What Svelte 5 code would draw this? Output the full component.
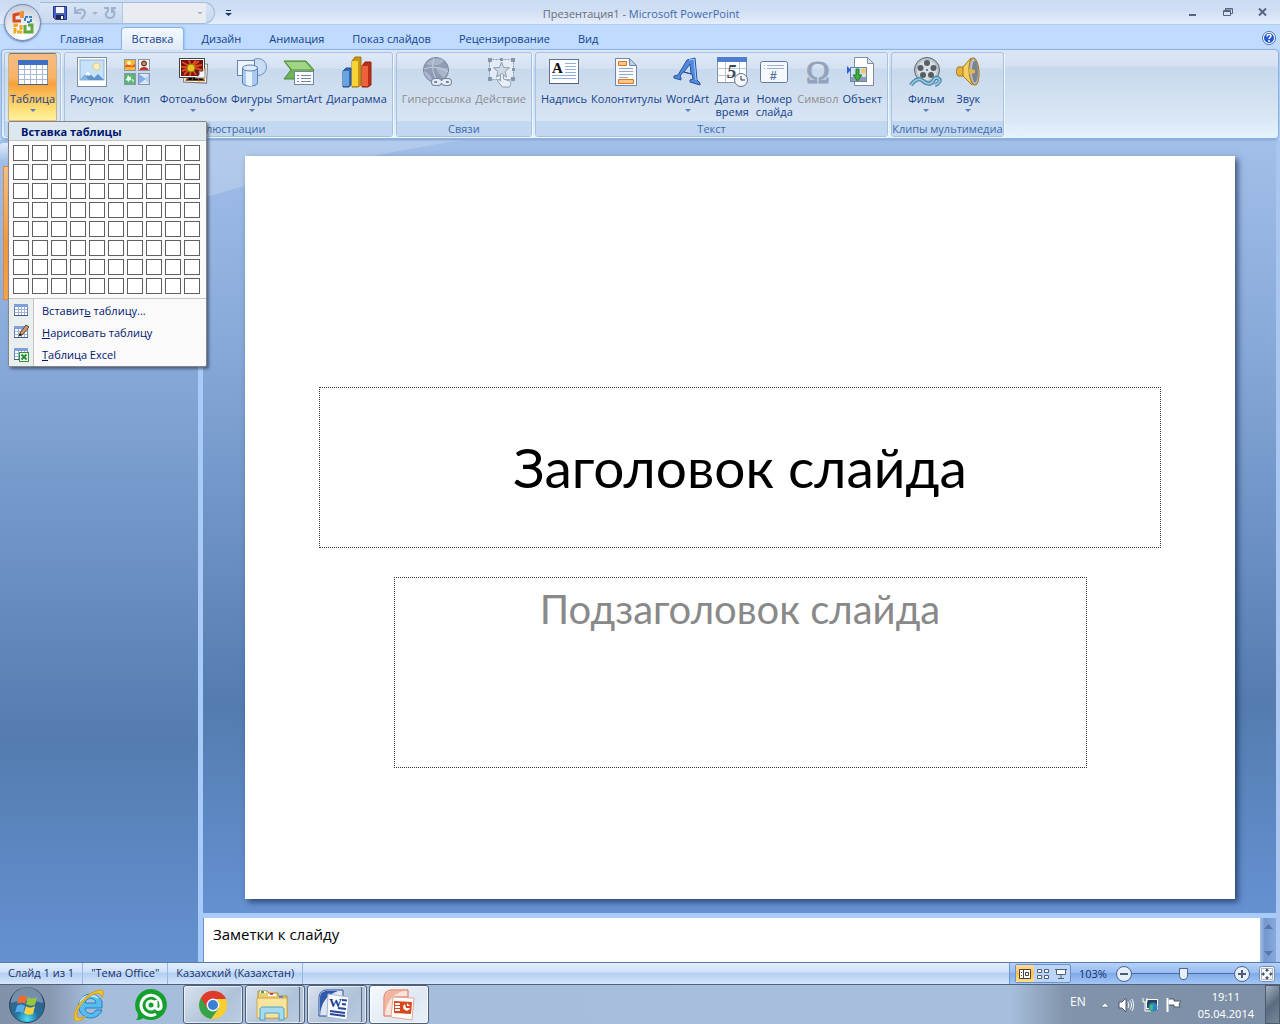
<svelte:options runes={true} />

<script lang="ts">
	type Tool = { icon: string; label: string; arrow?: boolean; disabled?: boolean };
	type Group = { title: string; tools: Tool[] };

	const tabs = ['Главная', 'Вставка', 'Дизайн', 'Анимация', 'Показ слайдов', 'Рецензирование', 'Вид'];

	const groups: Group[] = [
		{
			title: 'Иллюстрации',
			tools: [
				{ icon: 'picture', label: 'Рисунок' },
				{ icon: 'clip', label: 'Клип' },
				{ icon: 'album', label: 'Фотоальбом', arrow: true },
				{ icon: 'shapes', label: 'Фигуры', arrow: true },
				{ icon: 'smartart', label: 'SmartArt' },
				{ icon: 'chart', label: 'Диаграмма' }
			]
		},
		{
			title: 'Связи',
			tools: [
				{ icon: 'link', label: 'Гиперссылка', disabled: true },
				{ icon: 'action', label: 'Действие', disabled: true }
			]
		},
		{
			title: 'Текст',
			tools: [
				{ icon: 'textbox', label: 'Надпись' },
				{ icon: 'header', label: 'Колонтитулы' },
				{ icon: 'wordart', label: 'WordArt', arrow: true },
				{ icon: 'date', label: 'Дата и\nвремя' },
				{ icon: 'number', label: 'Номер\nслайда' },
				{ icon: 'symbol', label: 'Символ', disabled: true },
				{ icon: 'object', label: 'Объект' }
			]
		},
		{
			title: 'Клипы мультимедиа',
			tools: [
				{ icon: 'film', label: 'Фильм', arrow: true },
				{ icon: 'sound', label: 'Звук', arrow: true }
			]
		}
	];

	const menuItems = [
		{ icon: 'insert', before: 'Вставит', key: 'ь', after: ' таблицу...' },
		{ icon: 'draw', before: '', key: 'Н', after: 'арисовать таблицу' },
		{ icon: 'excel', before: '', key: 'Т', after: 'аблица Excel' }
	];

	const rows = [1, 2, 3, 4, 5, 6, 7, 8];
	const cols = [1, 2, 3, 4, 5, 6, 7, 8, 9, 10];

	let activeTab = $state('Вставка');
	let zoom = $state(103);
	let notes = $state('Заметки к слайду');
</script>

{#snippet toolIcon(name: string)}
	<svg class="icon" viewBox="0 0 32 32" aria-hidden="true">
		{#if name === 'table'}
			<rect x="1.500" y="4.500" width="29" height="24" fill="#fff" stroke="#7f93b5" />
			<rect x="1" y="4" width="30" height="5" fill="#3f6fc4" />
			<path d="M2 13.500h28M2 18.500h28M2 23.500h28M7.500 9v19M13.500 9v19M19.500 9v19M25.500 9v19" stroke="#a9bad6" fill="none" />
			<path d="M1 28.500h30" stroke="#4a5f86" />
		{:else if name === 'picture'}
			<rect x="1.500" y="1.500" width="29" height="29" fill="#fff" stroke="#7d90a8" />
			<rect x="4" y="4" width="24" height="20" fill="#c4e2fa" stroke="#8fb3d6" />
			<circle cx="20.500" cy="10.500" r="3.500" fill="#fdf1c0" stroke="#e8c77c" />
			<path d="M4 24l8-9 6 7 4-4 6 6z" fill="#5f93c9" />
			<path d="M9 18l3-3 3 3.500-2 1.500-1-1-2 1z" fill="#f4faff" />
			<path d="M4 24l5-5 4 5z" fill="#87b3df" />
		{:else if name === 'clip'}
			<rect x="3.500" y="3.500" width="11" height="11" fill="#f7b733" stroke="#8b97a8" />
			<path d="M4 10l3-2 4 2 3-2v3H4z" fill="#e6552a" />
			<circle cx="8" cy="7" r="2" fill="#fff1a8" />
			<rect x="17.500" y="3.500" width="11" height="11" fill="#eef2f7" stroke="#8b97a8" />
			<circle cx="23" cy="7.500" r="2.500" fill="#c98555" stroke="#402a20" />
			<path d="M18.500 14c0-4 9-4 9 0z" fill="#c83728" />
			<rect x="3.500" y="17.500" width="11" height="11" fill="#56b573" stroke="#8b97a8" />
			<path d="M7 19l1.500 2 2-.5-1 2 1.500 1.500-2.500.5-1 2-1-2-2-.5 1.500-2zM11 23l2 1-1 3z" fill="#eafbe9" />
			<rect x="17.500" y="17.500" width="11" height="11" fill="#dbe8fb" stroke="#8b97a8" />
			<path d="M18 18l7 5-7 5z" fill="#86aeea" />
			<path d="M28 18v10l-4-5z" fill="#b6cdf2" />
		{:else if name === 'album'}
			<g transform="rotate(3 18 18)">
				<rect x="7" y="7.500" width="23" height="19" fill="#fff" stroke="#777" />
				<rect x="9" y="9" width="19" height="16" fill="#e9a021" />
				<path d="M9 25l9-9 10 8M18 16l10-3M18 17l-3 8M18 17l5 8M18 16l10 2" stroke="#b8480e" />
			</g>
			<rect x="2.500" y="2.500" width="25" height="19" fill="#fff" stroke="#444" />
			<rect x="4" y="4" width="22" height="16" fill="#6c150d" />
			<path d="M14 11L5 6M14 11l-2-7M14 11l5-7M14 11l8-6M14 11l11-2M14 11l11 3M14 11l5 8M14 11l-1 9M14 11l-7 8M14 11l-9 4M14 11H4" stroke="#e4471d" stroke-width="2" />
			<circle cx="14" cy="12" r="4" fill="#e9c31d" stroke="#8d7a10" />
			<path d="M28 12v10h-10c4-1 5-4 4-7 3 1 5 0 6-3z" fill="#f4f4f4" stroke="#888" />
		{:else if name === 'shapes'}
			<circle cx="22" cy="11" r="8.500" fill="#c8dcf5" stroke="#6f94c4" />
			<rect x="1.500" y="4.500" width="17" height="15" fill="#eef5fd" stroke="#6585b3" />
			<path d="M6.500 12v15c0 4 15 4 15 0V12z" fill="#a9c9ee" stroke="#5c81b6" />
			<path d="M10 14v15c3 1 5 1 6 1V14z" fill="#e7f2fe" />
			<ellipse cx="14" cy="12" rx="7.500" ry="3" fill="#ddebfa" stroke="#5c81b6" />
		{:else if name === 'smartart'}
			<path d="M1 5h22l8 9-7 9H1l7-9z" fill="#6fb554" stroke="#47883a" />
			<path d="M3 6h19l6 7H9z" fill="#a2d487" />
			<rect x="11.500" y="15.500" width="19" height="13" fill="#f8fafc" stroke="#78889c" />
			<path d="M14 19.500h2M14 22.500h2M14 25.500h2M18 19.500h10M18 22.500h10M18 25.500h10" stroke="#75869f" />
		{:else if name === 'chart'}
			<path d="M2 15l3-3h5v17l-2 2H2z" fill="#2f6cb5" stroke="#244f87" />
			<path d="M2 15h6v15H2z" fill="#69a4e0" />
			<path d="M11 5l3-4h6v28l-3 2h-6z" fill="#c99510" stroke="#a2760e" />
			<path d="M11 5h6v25h-6z" fill="#f6d339" />
			<path d="M21 10l3-4h6v23l-3 2h-6z" fill="#b82e16" stroke="#962410" />
			<path d="M21 10h6v20h-6z" fill="#f0623b" />
		{:else if name === 'link'}
			<circle cx="15" cy="14" r="12.500" fill="#8e9db5" stroke="#76869f" />
			<path d="M5 8c4-6 14-7 18-3-2 3-9 6-18 3zM3 15c5 2 8 5 8 10-5-2-8-6-8-10zM16 11c5 0 8 2 11 1 0 6-3 9-5 10-2-4-8-6-6-11z" fill="#a9b6ca" />
			<path d="M3 13c8-3 16-2 24 3M13 2c-3 8-1 17 4 24" stroke="#c3cedd" fill="none" />
			<g fill="none" stroke="#75859e" stroke-width="4">
				<rect x="12" y="24" width="7" height="4" rx="2" />
				<rect x="22" y="24" width="7" height="4" rx="2" />
			</g>
			<g fill="none" stroke="#e4ebf4" stroke-width="2">
				<rect x="12" y="24" width="7" height="4" rx="2" />
				<rect x="22" y="24" width="7" height="4" rx="2" />
				<path d="M16 26h9" />
			</g>
		{:else if name === 'action'}
			<rect x="4.500" y="3.500" width="24" height="20" fill="#e3ebf5" stroke="#8e9cb0" stroke-dasharray="2 1" />
			<path d="M3 2h4v4H3zM15 2h3v3h-3zM26 2h4v4h-4zM3 12h3v3H3zM27 12h3v3h-3zM3 21h4v4H3zM26 21h4v4h-4z" fill="#8595ae" />
			<path d="M16.500 6l2 5.500 6 .3-4.500 3.700 1.500 5.500-5-3-5 3 1.500-5.500-4.500-3.700 6-.3z" fill="#d0dae7" stroke="#8e9cb0" />
			<path d="M15.500 19c0-2 3-2 3 0v4l6 2c2 1 1 4 0 6h-7l-5-6c0-2 2-1 3 0z" fill="#e9eff6" stroke="#8e9cb0" />
		{:else if name === 'textbox'}
			<rect x="1.500" y="3.500" width="29" height="24" fill="#fff" stroke="#60738f" />
			<path d="M1 28h30v-1H1z" fill="#4f617d" />
			<text x="4" y="17" font-size="15" font-family="Liberation Serif, serif" font-weight="700" fill="#111">A</text>
			<path d="M17 7.500h11M17 10.500h11M17 13.500h11M17 16.500h11M4 19.500h24M4 22.500h24" stroke="#8fb0dd" />
		{:else if name === 'header'}
			<path d="M5.500 2.500h14l7 7v20h-21z" fill="#f7fafe" stroke="#7186a5" />
			<path d="M19.500 2.500v7h7z" fill="#bcd1ec" stroke="#7186a5" />
			<path d="M8.500 5.500h8v4h-8zM8.500 23.500h15v4h-15z" fill="#f9c78c" stroke="#df7a1c" />
			<path d="M9 12.500h14M9 15.500h14M9 18.500h14M9 21.500h9" stroke="#94a9c7" />
		{:else if name === 'wordart'}
			<path d="M15 4l8-2 2 22 3 3v2l-10-3v-2l3-1-1-5-9-2-3 4 1 2v2L2 22v-2l4-1zM18 8l-6 8 7 2z" fill="#4f8ae0" stroke="#2a519c" fill-rule="evenodd" />
			<path d="M17 4l5-1 2 21" stroke="#a6cbfa" fill="none" />
		{:else if name === 'date'}
			<rect x="1.500" y="1.500" width="29" height="25" fill="#fff" stroke="#8294b0" />
			<rect x="1" y="1" width="30" height="5" fill="#4f7ed0" />
			<path d="M2 12.500h28M2 19.500h28M9.500 6v20M23.500 6v20" stroke="#b8c4d8" />
			<text x="11" y="22" font-size="19" font-family="Liberation Serif, serif" font-weight="700" font-style="italic" fill="#3d4550">5</text>
			<circle cx="25" cy="24" r="6.500" fill="#f3f6fa" stroke="#66758c" />
			<path d="M25 20v4h4" stroke="#333" fill="none" />
		{:else if name === 'number'}
			<rect x="2.500" y="5.500" width="27" height="21" rx="2" fill="#f5f9fe" stroke="#63789a" />
			<path d="M6 9.500h1M9 9.500h17M6 12.500h1M9 12.500h17" stroke="#9fb1ca" />
			<text x="12" y="24" font-size="12" font-family="Liberation Sans, sans-serif" font-weight="700" fill="#55709c">#</text>
		{:else if name === 'symbol'}
			<text x="16" y="27" text-anchor="middle" font-size="32" font-family="Liberation Serif, serif" fill="#94a3bb" stroke="#94a3bb">Ω</text>
		{:else if name === 'object'}
			<path d="M8.500 1.500h13l6 6v22h-19z" fill="#fff" stroke="#7f8ea3" />
			<path d="M21.500 1.500v6h6z" fill="#dfe6ef" stroke="#7f8ea3" />
			<rect x="4.500" y="11.500" width="16" height="14" fill="#cfe3f7" stroke="#6d83a4" />
			<path d="M5 21h15v4H5z" fill="#8c9db5" />
			<circle cx="17.500" cy="15" r="2.500" fill="#f5c661" />
			<path d="M10 13h3v6h3l-4.500 6L7 19h3z" fill="#3eae43" stroke="#25762a" />
			<path d="M1 10l4 4-4 4z" fill="#2f62cf" />
		{:else if name === 'film'}
			<circle cx="17" cy="14" r="12.500" fill="#b9c0c6" stroke="#5d666e" />
			<circle cx="17" cy="14" r="10" fill="#d9dee2" />
			<g fill="#555f68">
				<circle cx="17" cy="7" r="3" /><circle cx="23.500" cy="12" r="3" /><circle cx="21" cy="19" r="3" />
				<circle cx="13" cy="19" r="3" /><circle cx="10.500" cy="12" r="3" /><circle cx="17" cy="14" r="1" />
			</g>
			<path d="M1 29c4-6 9-7 12-4s8 4 10 0 4-4 6-2-1 5-4 6" fill="none" stroke="#3e7a9b" stroke-width="4" />
			<path d="M1 29c4-6 9-7 12-4s8 4 10 0 4-4 6-2-1 5-4 6" fill="none" stroke="#8ec8e3" stroke-width="2" />
		{:else if name === 'sound'}
			<path d="M6 11h6v9H6c-2-2-2-7 0-9z" fill="#e7b23c" stroke="#a67617" />
			<path d="M11 11L19 2l4 14-3 13-9-9z" fill="#f3cf64" stroke="#a67617" />
			<ellipse cx="22" cy="15.500" rx="5" ry="13.500" fill="#b4bac0" stroke="#a67617" transform="rotate(-4 22 15)" />
			<ellipse cx="23" cy="15.500" rx="3" ry="11" fill="#7b848d" />
			<path d="M17 13l6 1v3l-6 1z" fill="#e5b748" />
		{/if}
	</svg>
{/snippet}

{#snippet menuIcon(name: string)}
	<svg class="menu-icon" viewBox="0 0 16 16" aria-hidden="true">
		<rect x="1.500" y="2.500" width="13" height="11" fill="#fff" stroke="#6c83b5" />
		<path d="M1 2h14v3H1z" fill="#7f9fdc" />
		<path d="M2 7.500h12M2 10.500h12M5.500 5v8M8.500 5v8M11.500 5v8" stroke="#9db2d8" fill="none" />
		<path d="M1 13.500h14" stroke="#44598a" />
		{#if name === 'draw'}
			<path d="M6 12l1-3 6-8 3 2-7 8z" fill="#d69a62" stroke="#5d4632" />
			<path d="M6 12l1-3 2 2z" fill="#222" />
		{:else if name === 'excel'}
			<rect x="6.500" y="6.500" width="9" height="9" fill="#e6f5e3" stroke="#3a8d3f" />
			<path d="M8.500 8.500l5 5M13.500 8.500l-5 5" stroke="#2f8a36" stroke-width="2" />
		{/if}
	</svg>
{/snippet}

<div class="window">
	<header class="chrome">
		<div class="titlebar">
			<div class="quick">
				<button class="plain" aria-label="Сохранить">
					<svg viewBox="0 0 16 16" width="16" height="16">
						<path d="M1.500 1.500h13v13h-11l-2-2z" fill="#4a5fc4" stroke="#28357f" />
						<path d="M4 2h8v6H4z" fill="#f4f6fc" />
						<path d="M4 10h8v4H4z" fill="#20284e" /><path d="M9 11h2v3H9z" fill="#fff" />
					</svg>
				</button>
				<button class="plain" aria-label="Отменить" disabled>
					<svg viewBox="0 0 16 16" width="16" height="16">
						<path d="M3 2v6h6M4 7c3-4 9-3 9 1 0 3-2 4-4 6" fill="none" stroke="#9fb1cf" stroke-width="2" />
					</svg>
				</button>
				<span class="arrow pale"></span>
				<button class="plain" aria-label="Повторить" disabled>
					<svg viewBox="0 0 16 16" width="16" height="16">
						<path d="M2 3h4v3C2 9 4 13 8 13c5 0 6-6 2-9M10 8V3h4" fill="none" stroke="#9fb1cf" stroke-width="2" />
					</svg>
				</button>
				<select aria-label="Стиль" disabled></select>
			</div>
			<button class="plain customize" aria-label="Настройка панели">
				<svg viewBox="0 0 7 8" width="7" height="8"><path d="M1 1h5v1H1zM0 4h7L3.500 7z" fill="#1d3468" /></svg>
			</button>
			<h1><span>Презентация1 -</span> Microsoft PowerPoint</h1>
			<div class="controls">
				<button class="plain" aria-label="Свернуть"><svg viewBox="0 0 10 10" width="10" height="10"><path d="M1 6h7v2H1z" fill="#56657d" /></svg></button>
				<button class="plain" aria-label="Восстановить">
					<svg viewBox="0 0 10 10" width="10" height="10"><path d="M2.500 2V.5h7v5H8M.5 2.500h7v5h-7zM0 3.500h8M2 1h7" fill="none" stroke="#56657d" /></svg>
				</button>
				<button class="plain" aria-label="Закрыть"><svg viewBox="0 0 10 10" width="10" height="10"><path d="M1 .5l7 7M8 .5l-7 7" stroke="#56657d" stroke-width="2" /></svg></button>
			</div>
		</div>

		<button class="office" aria-label="Кнопка Office">
			<svg viewBox="0 0 24 24" width="24" height="24" fill="none">
				<path d="M10 10H3V4l8-2v5" stroke="#d9481c" stroke-width="3" />
				<path d="M8 3l3-1v5" stroke="#f2902a" stroke-width="3" />
				<path d="M14 10V6h6v5h-4" stroke="#3a80c9" stroke-width="2" stroke-dasharray="3 1" />
				<path d="M10 14v7H4v-7h4" stroke="#f2a71f" stroke-width="3" stroke-dasharray="5 1" />
				<path d="M14 14v7h7v-7h-4" stroke="#63a83c" stroke-width="3" />
			</svg>
		</button>

		<nav class="tabs">
			{#each tabs as tab}
				<button class="tab" class:active={tab === activeTab} onclick={() => (activeTab = tab)}>{tab}</button>
			{/each}
			<button class="plain help" aria-label="Справка">
				<svg viewBox="0 0 14 14" width="14" height="14">
					<circle cx="7" cy="7" r="6.500" fill="#fff" stroke="#4a6fb5" />
					<circle cx="7" cy="7" r="5" fill="#2458cc" />
					<path d="M5 5.500c0-3 4-2.500 4-.5 0 1.500-2 1.500-2 3M7 9v2" stroke="#fff" fill="none" stroke-width="1.500" />
				</svg>
			</button>
		</nav>

		<div class="ribbon">
			<section class="group front">
				<div class="tools">
					<button class="tool pressed" aria-haspopup="menu" aria-expanded="true">
						{@render toolIcon('table')}
						<span class="caption">Таблица</span>
						<span class="arrow"></span>
					</button>
				</div>
				<div class="strip"></div>

				<div class="menu" role="menu">
					<h3>Вставка таблицы</h3>
					<div class="picker">
						{#each rows as row}
							{#each cols as col}
								<button aria-label={`${col} x ${row}`}></button>
							{/each}
						{/each}
					</div>
					<ul>
						{#each menuItems as item}
							<li>
								<button role="menuitem">
									<span class="gutter">{@render menuIcon(item.icon)}</span>
									<span>{item.before}<u>{item.key}</u>{item.after}</span>
								</button>
							</li>
						{/each}
					</ul>
				</div>
			</section>

			{#each groups as group}
				<section class="group">
					<div class="tools">
						{#each group.tools as tool}
							<button class="tool" disabled={tool.disabled}>
								{@render toolIcon(tool.icon)}
								<span class="caption">{tool.label}</span>
								{#if tool.arrow}<span class="arrow"></span>{/if}
							</button>
						{/each}
					</div>
					<h2 class="strip">{group.title}</h2>
				</section>
			{/each}
		</div>
	</header>

	<main>
		<aside>
			<div class="pane-tab"></div>
			<div class="thumb"></div>
		</aside>
		<div class="editor">
			<div class="stage">
				<svg class="swoosh" viewBox="0 0 1073 773" preserveAspectRatio="none" aria-hidden="true">
					<path d="M0 0H260C170 14 80 34 0 58z" fill="#fff" opacity="0.2" />
				</svg>
				<article class="slide">
					<div class="holder title">Заголовок слайда</div>
					<div class="holder subtitle">Подзаголовок слайда</div>
				</article>
			</div>
			<div class="notes">
				<textarea aria-label="Заметки" bind:value={notes}></textarea>
				<div class="scroll">
					<button class="plain" aria-label="Вверх"><svg viewBox="0 0 9 5" width="9" height="5"><path d="M0 5h9L4.500 0z" fill="#5875a5" /></svg></button>
					<button class="plain" aria-label="Вниз"><svg viewBox="0 0 9 5" width="9" height="5"><path d="M0 0h9L4.500 5z" fill="#5875a5" /></svg></button>
				</div>
			</div>
		</div>
	</main>

	<footer class="status">
		<span class="cell">Слайд 1 из 1</span>
		<span class="cell">"Тема Office"</span>
		<span class="cell">Казахский (Казахстан)</span>
		<div class="view-tools">
			<div class="views">
				<button class="plain on" aria-label="Обычный">
					<svg viewBox="0 0 12 12" width="12" height="12"><path d="M.5 1.500h11v9H.5z" fill="#fff" stroke="#4d4436" /><path d="M4.500 1v10M6.500 4.500h3v3h-3zM2 4.500h1M2 7.500h1" fill="none" stroke="#4d4436" /></svg>
				</button>
				<button class="plain" aria-label="Сортировщик">
					<svg viewBox="0 0 12 12" width="12" height="12"><path d="M.5 1.500h4v3h-4zM7.500 1.500h4v3h-4zM.5 7.500h4v3h-4zM7.500 7.500h4v3h-4z" fill="#fff" stroke="#53607a" /></svg>
				</button>
				<button class="plain" aria-label="Показ слайдов">
					<svg viewBox="0 0 12 12" width="12" height="12"><path d="M1.500 2v4.500h9V2" fill="#fff" stroke="#53607a" /><path d="M0 1.500h12M6 7v3M3 10.500h6" fill="none" stroke="#53607a" /></svg>
				</button>
			</div>
			<output>{zoom}%</output>
			<button class="plain" aria-label="Уменьшить">
				<svg viewBox="0 0 16 16" width="16" height="16"><circle cx="8" cy="8" r="7.500" fill="#e4eefb" stroke="#4d6285" /><path d="M4 7h8v2H4z" fill="#4d5b75" /></svg>
			</button>
			<input type="range" min="10" max="196" aria-label="Масштаб" bind:value={zoom} />
			<button class="plain" aria-label="Увеличить">
				<svg viewBox="0 0 16 16" width="16" height="16"><circle cx="8" cy="8" r="7.500" fill="#e4eefb" stroke="#4d6285" /><path d="M4 7h8v2H4zM7 4h2v8H7z" fill="#4d5b75" /></svg>
			</button>
			<button class="plain fit" aria-label="Вписать в окно">
				<svg viewBox="0 0 16 16" width="16" height="16">
					<rect x=".5" y=".5" width="15" height="15" rx="2" fill="#f5f9ff" stroke="#7c8ca6" />
					<rect x="2.500" y="2.500" width="11" height="11" fill="none" stroke="#6b7687" stroke-dasharray="1 1" />
					<path d="M8 3v3M8 10v3M3 8h3M10 8h3" stroke="#4e596b" />
					<path d="M6 5l2-3 2 3zM6 11l2 3 2-3zM5 6L2 8l3 2zM11 6l3 2-3 2z" fill="#4e596b" />
				</svg>
			</button>
		</div>
	</footer>

	<div class="taskbar">
		<button class="plain start" aria-label="Пуск">
			<svg viewBox="0 0 38 38" width="38" height="38">
				<defs>
					<radialGradient id="orb" cx="50%" cy="90%" r="80%">
						<stop offset="0" stop-color="#4fe0f8" /><stop offset=".4" stop-color="#24719f" /><stop offset="1" stop-color="#3d5c80" />
					</radialGradient>
				</defs>
				<circle cx="19" cy="19" r="17.500" fill="url(#orb)" stroke="#28455f" />
				<path d="M3 17a16 16 0 0 1 32 0c-9-3-23-3-32 0z" fill="#fff" opacity=".3" />
				<path d="M11 11c3-2 5-2 8 0l-2 7c-3-2-5-1-8 0z" fill="#ee6a30" />
				<path d="M20 11c3 2 5 2 9 0l-2 8c-4 1-6 1-9-1z" fill="#96c73c" />
				<path d="M9 20c3-2 5-2 8 0l-2 7c-3-2-6-1-8 0z" fill="#58aee8" />
				<path d="M18 20c3 2 5 2 9 0l-2 8c-4 1-6 1-9-1z" fill="#fbd13f" />
			</svg>
		</button>
		<button class="task" aria-label="Internet Explorer">
			<svg viewBox="0 0 32 32" width="32" height="32">
				<path d="M29 21a12 12 0 1 1 0-8v6H12c0 6 8 8 11 2z" fill="#57bdf0" stroke="#2580bd" />
				<path d="M12 14c1-6 10-6 11 0z" fill="#a9c3df" stroke="#2580bd" />
				<path d="M7 14c2-7 12-10 18-5" fill="none" stroke="#b9e8fc" stroke-width="2" />
				<path d="M2 31C-3 23 13 3 27 1c5 0 3 5 2 8 0-5-4-6-10-3C10 11 2 22 4 28c2 2 5 1 9-1-4 4-9 7-11 4z" fill="#f3c52f" stroke="#d19e1b" />
			</svg>
		</button>
		<button class="task" aria-label="Mail.Ru Агент">
			<svg viewBox="0 0 32 32" width="32" height="32">
				<path d="M16 0a16 15.500 0 1 1-8 29c-2 2-5 2-7 2 2-2 2-4 2-6A16 16 0 0 1 16 0z" fill="#14a02d" />
				<circle cx="16" cy="16" r="4" fill="none" stroke="#fff" stroke-width="3" />
				<path d="M21 11v7c0 4 6 3 5-2a10 10 0 1 0-5 9" fill="none" stroke="#fff" stroke-width="3" />
			</svg>
		</button>
		<button class="task open" aria-label="Google Chrome">
			<svg viewBox="0 0 32 32" width="32" height="32">
				<circle cx="16" cy="16" r="14" fill="#f7cf32" />
				<path d="M16 16L3.900 9A14 14 0 0 0 14 29.900L22 19z" fill="#35a34a" />
				<path d="M3.900 9A14 14 0 0 1 29 10H16l-6 9z" fill="#dd3b2c" />
				<circle cx="16" cy="16" r="6.500" fill="#f4f6f8" /><circle cx="16" cy="16" r="5" fill="#3b7fd4" />
			</svg>
		</button>
		<button class="task open stacked" aria-label="Проводник">
			<svg viewBox="0 0 32 32" width="32" height="32">
				<path d="M2 6V2h9l2 2h9v3h9v22H2z" fill="#e9cd72" stroke="#b59240" />
				<path d="M4 2h6v2H4zM12 5h8v2h-8z" fill="#fff" /><path d="M5 2h3v2H5z" fill="#3aa54e" /><path d="M14 4h3v2h-3z" fill="#d0453a" /><path d="M23 7h4v2h-4z" fill="#3d86d8" />
				<path d="M1 9h30v20H1z" fill="#f8e59b" stroke="#caa850" />
				<path d="M4 31V21c0-2 1-3 3-3h18c2 0 3 1 3 3v10h-5v-7H9v7z" fill="#a5dbf2" stroke="#4e9fc6" />
			</svg>
		</button>
		<button class="task open stacked" aria-label="Microsoft Word">
			<svg viewBox="0 0 32 32" width="32" height="32">
				<path d="M1 27V9c0-5 3-8 8-8h16v7H11v19z" fill="#dfe7f5" stroke="#284c9c" />
				<path d="M2 27C3 14 8 6 20 2H9C5 2 2 4 2 9z" fill="#3059ad" />
				<path d="M10 5l21 3-2 23-20-3z" fill="#f8faff" stroke="#a9b8d4" />
				<text x="11" y="18" font-size="13" font-family="Liberation Serif, serif" font-weight="700" fill="#1e3f8f">W</text>
				<path d="M24 11l5 .5M24 15l4 .5M20 19l8 1M12 22l15 2M12 25l15 2" stroke="#28479a" stroke-width="2" />
			</svg>
		</button>
		<button class="task open current" aria-label="Microsoft PowerPoint">
			<svg viewBox="0 0 32 32" width="32" height="32">
				<path d="M1 27V9c0-5 3-8 8-8h16v7H11v19z" fill="#fbe4db" stroke="#d9694a" />
				<path d="M2 27C3 14 8 6 20 2H9C5 2 2 4 2 9z" fill="#f2b5a0" />
				<path d="M10 8l21 1-2 22-21-3z" fill="#fff" stroke="#e0a896" />
				<path d="M11 12l18 1-1 12-17-1z" fill="#d8481f" />
				<path d="M12 15h5M12 18h5M12 21h5" stroke="#fff" stroke-width="2" />
				<path d="M22 15a3.500 3.500 0 1 0 5 4h-4z" fill="#fff" />
				<path d="M24 14l3 3h-3z" fill="#fff" />
			</svg>
		</button>
		<div class="tray">
			<span class="lang">EN</span>
			<button class="plain" aria-label="Скрытые значки"><svg viewBox="0 0 10 16" width="10" height="16"><path d="M1 10h8L5 6z" fill="#fff" stroke="#4b5869" stroke-width=".5" /></svg></button>
			<button class="plain" aria-label="Громкость">
				<svg viewBox="0 0 16 16" width="16" height="16"><path d="M1 5h3l4-4v14l-4-4H1z" fill="#fff" stroke="#4b5869" /><path d="M10 5c1 2 1 4 0 6M12 3.500c2 3 2 6 0 9M14 2c2 4 2 8 0 12" fill="none" stroke="#fff" /></svg>
			</button>
			<button class="plain" aria-label="Сеть">
				<svg viewBox="0 0 16 16" width="16" height="16"><rect x="4.500" y="2.500" width="11" height="9" fill="#27425e" stroke="#fff" /><path d="M1 1v4h4V1M3 5v9h6" fill="none" stroke="#fff" /><circle cx="11" cy="10" r="4.500" fill="#2785cf" /><path d="M8 9c2-3 4-1 3 1s1 3-1 4c-2-1-3-3-2-5z" fill="#4bc05c" /></svg>
			</button>
			<button class="plain" aria-label="Центр поддержки">
				<svg viewBox="0 0 16 16" width="16" height="16"><path d="M1.500 1v14M2 2h6v2h7l-2 3 1 3H8V8H2z" fill="#fff" stroke="#4b5869" /><path d="M1.500 1v14" stroke="#fff" stroke-width="2" /></svg>
			</button>
			<time>19:11<br />05.04.2014</time>
			<button class="desktop" aria-label="Свернуть все окна"></button>
		</div>
	</div>
</div>

<style>
	:global(body) {
		margin: 0;
		background: #bfdbff;
	}

	.window {
		display: flex;
		flex-direction: column;
		min-height: 100vh;
		font-family: 'Open Sans', 'Noto Sans', sans-serif;
		font-size: 11px;
		line-height: 13px;
		color: #15428b;
	}

	button,
	select,
	textarea {
		font: inherit;
		color: inherit;
	}

	.plain {
		display: flex;
		align-items: center;
		justify-content: center;
		padding: 0;
		border: 0;
		background: none;
	}

	h1,
	h2,
	h3,
	ul {
		margin: 0;
		padding: 0;
		font-size: 11px;
		font-weight: 400;
		list-style: none;
	}

	.chrome {
		position: relative;
		z-index: 2;
	}

	.titlebar {
		display: flex;
		align-items: center;
		height: 25px;
		box-sizing: border-box;
		padding: 2px 12px 0 40px;
		border-bottom: 1px solid #b3cdf0;
		background: linear-gradient(#cbdcf3, #cfdef4 40%, #e4edfb);
	}

	.quick {
		display: flex;
		align-items: center;
		gap: 4px;
		height: 22px;
		box-sizing: border-box;
		padding: 0 8px 0 12px;
		border: 1px solid #a5bddd;
		border-left: 0;
		border-radius: 0 12px 12px 0;
		background: linear-gradient(#d9e5f5, #c7d8ef);
	}

	.quick select {
		appearance: none;
		width: 84px;
		height: 20px;
		border: 0;
		border-left: 1px solid #b5c8e2;
		border-radius: 0;
		opacity: 1;
		background:
			conic-gradient(from -45deg at 50% 100%, #a9b4c4 90deg, transparent 0) 74px 9px / 6px 3px no-repeat,
			#e9ecf1;
		transform: none;
	}

	.customize {
		margin-left: 10px;
	}

	h1 {
		flex: 1;
		padding-right: 138px;
		text-align: center;
		color: #3e6aaa;
	}

	h1 span {
		color: #696d77;
	}

	.controls {
		display: flex;
		gap: 25px;
	}

	.office {
		position: absolute;
		top: 4px;
		left: 4px;
		display: flex;
		align-items: center;
		justify-content: center;
		width: 37px;
		height: 37px;
		padding: 0;
		border: 1px solid #7088ae;
		border-radius: 50%;
		background: radial-gradient(circle at 50% 90%, #fff, #e4e9f1 50%, #b9c4d6);
		box-shadow: 0 1px 2px rgba(50, 70, 110, 0.6);
	}

	.tabs {
		display: flex;
		gap: 6px;
		height: 24px;
		box-sizing: border-box;
		padding: 2px 4px 0 49px;
		background: #bfdbff;
	}

	.tab {
		padding: 0 10px;
		border: 1px solid transparent;
		border-bottom: 0;
		border-radius: 4px 4px 0 0;
		background: none;
	}

	.tab.active {
		position: relative;
		z-index: 1;
		margin-bottom: -1px;
		padding-bottom: 1px;
		border-color: #8db2e3;
		background: linear-gradient(#f4f9ff, #dfe9f6);
		box-shadow: 1px 0 2px rgba(110, 180, 240, 0.6);
	}

	.help {
		margin-left: auto;
	}

	.ribbon {
		display: flex;
		gap: 3px;
		height: 90px;
		box-sizing: border-box;
		margin: 0 1px 1px;
		padding: 2px 2px 1px;
		border: 1px solid #8db2e3;
		border-radius: 4px;
		background: linear-gradient(#dbe6f4, #d5e1f2 18%, #c7d8ed 20%, #d8e6f3 75%, #e3f4ff);
		box-shadow: 0 1px 2px #7b9cc9;
	}

	.group {
		position: relative;
		display: flex;
		flex-direction: column;
		border: 1px solid #a7c1e0;
		border-radius: 3px;
		background: linear-gradient(#dfe9f6, #d5e1f2 18%, #c9d9ed 20%, #dbe8f5);
		box-shadow: 1px 1px 0 #eef6ff;
	}

	.group.front {
		z-index: 1;
	}

	.tools {
		display: flex;
		flex: 1;
		justify-content: center;
		padding: 0 3px;
	}

	.strip {
		height: 15px;
		border-radius: 0 0 2px 2px;
		background: #c2d8f0;
		line-height: 15px;
		color: #3e6aaa;
		text-align: center;
		white-space: nowrap;
	}

	.tool {
		display: flex;
		flex-direction: column;
		align-items: center;
		min-width: 42px;
		padding: 2px 1px 0;
		border: 1px solid transparent;
		background: none;
	}

	.tool:disabled {
		color: #8d8d8d;
	}

	.tool.pressed {
		border-color: #8b7654 #c5b28e transparent;
		border-radius: 3px 3px 0 0;
		background: linear-gradient(#f3bd85, #f8b467 35%, #f8a13d 45%, #fde27a 85%, #fff0a0);
	}

	.icon {
		width: 32px;
		height: 32px;
		overflow: visible;
	}

	.caption {
		margin-top: 4px;
		white-space: pre-line;
	}

	.arrow {
		width: 0;
		margin-top: 4px;
		border: 3px solid transparent;
		border-top-color: #5b7fb5;
		border-bottom: 0;
	}

	.arrow.pale {
		margin-top: 0;
		border-top-color: #a3b4d0;
	}

	.menu {
		position: absolute;
		top: 68px;
		left: 3px;
		width: 197px;
		border: 1px solid #868686;
		border-radius: 2px;
		background: #fafafa;
		box-shadow: 2px 2px 3px rgba(40, 50, 70, 0.6);
		color: #00156e;
	}

	.menu h3 {
		padding: 3px 12px 2px;
		border-bottom: 1px solid #c5c5c5;
		background: #dde7ee;
		font-weight: 700;
	}

	.picker {
		display: grid;
		grid-template-columns: repeat(10, 16px);
		gap: 3px;
		padding: 4px;
		border-bottom: 1px solid #c5c5c5;
	}

	.picker button {
		height: 16px;
		padding: 0;
		border: 1px solid #606060;
		background: #fff;
	}

	.menu ul {
		padding-bottom: 1px;
		background: linear-gradient(90deg, #e9eeee 24px, #c5c5c5 24px, #c5c5c5 25px, transparent 25px);
	}

	.menu li button {
		display: flex;
		align-items: center;
		gap: 9px;
		width: 100%;
		height: 22px;
		padding: 0;
		border: 0;
		background: none;
	}

	.gutter {
		display: flex;
		justify-content: center;
		width: 24px;
	}

	.menu-icon {
		width: 16px;
		height: 16px;
	}

	main {
		display: flex;
		flex: 1;
		padding-right: 4px;
		background: #a8c6ef;
	}

	aside,
	.stage {
		background: linear-gradient(#a2bfe8, #86a7d8 28%, #547cb0 73%, #6591d1);
	}

	aside {
		width: 198px;
	}

	.pane-tab {
		width: 9px;
		height: 20px;
		margin-top: 3px;
		border-radius: 3px 0 0 0;
		background: linear-gradient(#dfebfb, #9dbbe6);
	}

	.thumb {
		width: 20px;
		height: 132px;
		margin: 3px 0 0 3px;
		border: 1px solid #d58a45;
		background: linear-gradient(#f4bf87, #f0983a 60%, #f6a347);
	}

	.editor {
		display: flex;
		flex: 1;
		flex-direction: column;
		border-left: 5px solid #a9cbf9;
	}

	.stage {
		position: relative;
		display: flex;
		flex: 1;
		padding: 16px 41px 14px 42px;
	}

	.swoosh {
		position: absolute;
		inset: 0;
		width: 100%;
		height: 100%;
	}

	.slide {
		position: relative;
		display: flex;
		flex: 1;
		flex-direction: column;
		align-items: center;
		gap: 29px;
		padding-top: 231px;
		background: #fff;
		box-shadow: 3px 3px 6px rgba(20, 40, 80, 0.7);
		font-family: Lato, 'Open Sans', sans-serif;
	}

	.holder {
		display: flex;
		justify-content: center;
		box-sizing: border-box;
		border: 1px dotted #333;
		white-space: nowrap;
	}

	.title {
		align-items: center;
		width: 85%;
		height: 161px;
		font-size: 55px;
		color: #000;
	}

	.subtitle {
		width: 70%;
		height: 191px;
		padding-top: 7px;
		font-size: 40px;
		line-height: 48px;
		color: #898989;
	}

	.notes {
		display: flex;
		height: 44px;
		border-top: 5px solid #a9cbf9;
		background: #fff;
	}

	.notes textarea {
		flex: 1;
		padding: 6px 9px;
		border: 0;
		border-left: 1px solid #6c93cc;
		outline: 0;
		resize: none;
		background: none;
		font-size: 15px;
		line-height: 20px;
		color: #000;
	}

	.scroll {
		display: flex;
		flex-direction: column;
		justify-content: space-between;
		width: 16px;
		padding: 6px 0;
		box-sizing: border-box;
		background: linear-gradient(90deg, #a3bfe8, #7498cd 30%, #88a9da);
	}

	.scroll button {
		width: 100%;
	}

	.status {
		display: flex;
		align-items: stretch;
		height: 22px;
		box-sizing: border-box;
		border-top: 1px solid #567db1;
		background: linear-gradient(#e3eefc, #d0e2fa 40%, #b4cff2 50%, #d6e6fb);
		color: #15306b;
	}

	.cell {
		padding: 0 8px;
		border-right: 1px solid #9ab8df;
		line-height: 20px;
	}

	.view-tools {
		display: flex;
		align-items: center;
		margin-left: auto;
		padding: 0 5px;
		border-left: 1px solid #6c93cc;
		background: linear-gradient(#b5d1f8, #98bdf2 45%, #7fabe9 50%, #a3c6f5);
	}

	.views {
		display: flex;
		margin-right: 8px;
		border: 1px solid #6e90c3;
		border-radius: 2px;
		background: #bcd4f5;
	}

	.views button {
		width: 18px;
		height: 17px;
	}

	.views .on {
		background: linear-gradient(#fbdb9f, #fcbf55 50%, #fde08a);
	}

	output {
		width: 37px;
	}

	input[type='range'] {
		appearance: none;
		width: 102px;
		height: 16px;
		margin: 0;
		background: linear-gradient(#4f6c9c, #4f6c9c) center / 100% 1px no-repeat;
	}

	input[type='range']::-webkit-slider-thumb {
		appearance: none;
		width: 9px;
		height: 12px;
		border: 1px solid #4f6589;
		border-radius: 1px 1px 5px 5px;
		background: #e6eefa;
	}

	.fit {
		margin-left: 9px;
	}

	.taskbar {
		display: flex;
		gap: 2px;
		height: 40px;
		box-sizing: border-box;
		border-top: 1px solid #4f617b;
		background: linear-gradient(90deg, #8191aa, #8898b1 50px, #a5bdda 90px, #a7bfdc calc(100% - 270px), #8194ab calc(100% - 215px), #7d8fa6);
	}

	.start {
		width: 57px;
		padding-right: 3px;
	}

	.task {
		display: flex;
		align-items: center;
		justify-content: center;
		width: 60px;
		padding: 0;
		border: 1px solid transparent;
		border-radius: 3px;
		background: none;
	}

	.task.open {
		border-color: #4e5f78;
		background: linear-gradient(135deg, #d8e2ee, #b0c2d8 60%, #bccde1);
		box-shadow: inset 0 0 0 1px rgba(255, 255, 255, 0.6);
	}

	.task.stacked {
		padding-right: 6px;
		box-shadow:
			inset 0 0 0 1px rgba(255, 255, 255, 0.6),
			inset -4px 0 0 #b5c5d9,
			inset -5px 0 0 #5a6b84;
	}

	.task.current {
		background: linear-gradient(135deg, #f7fafd, #dfe8f2 60%, #e8eff7);
	}

	.tray {
		display: flex;
		align-items: center;
		gap: 8px;
		margin-left: auto;
		color: #fff;
		font-size: 12px;
		line-height: 17px;
	}

	.lang {
		margin: 0 6px 6px 0;
	}

	time {
		margin: 0 3px 0 8px;
		font-family: 'Noto Sans', sans-serif;
		font-size: 11px;
		text-align: center;
	}

	.desktop {
		align-self: stretch;
		width: 15px;
		padding: 0;
		border: 1px solid #4d5b6e;
		background: linear-gradient(135deg, #a3b0c1, #5c6b80 50%, #78879c);
	}
</style>
